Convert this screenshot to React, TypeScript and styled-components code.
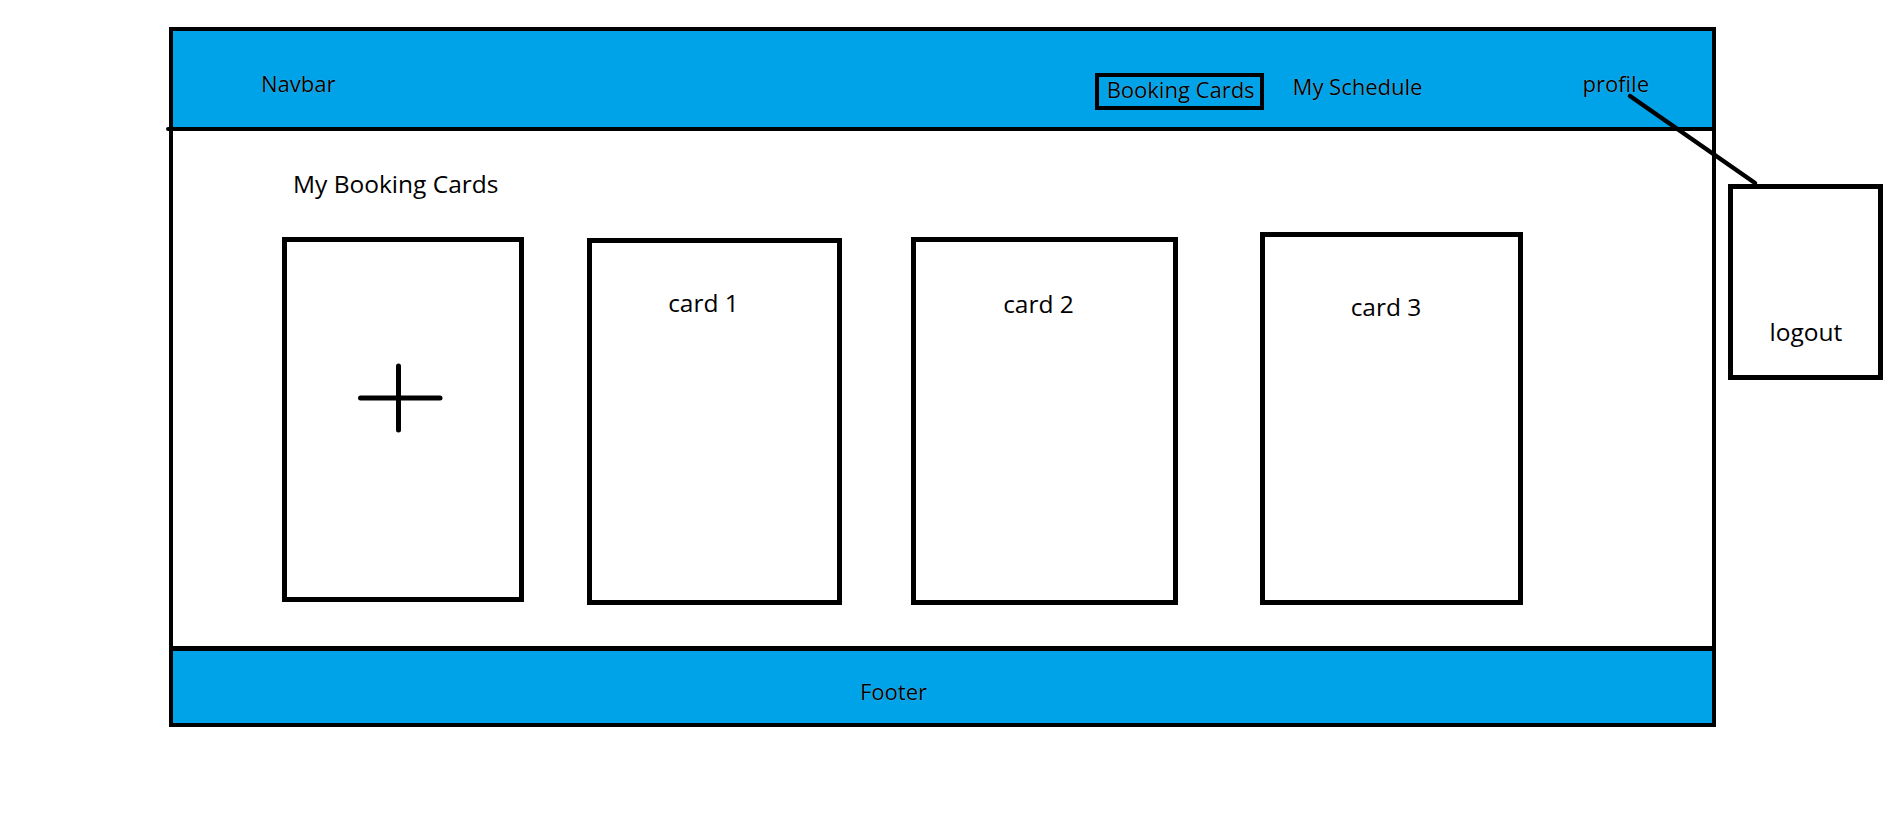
import React from "react";
import styled, { createGlobalStyle } from "styled-components";

const GlobalStyle = createGlobalStyle`
  html, body { margin: 0; padding: 0; background: #ffffff; }
  body { font-family: "Open Sans", "Liberation Sans", sans-serif; color: #000; }
  * { box-sizing: border-box; }
`;

const BLUE = "#00a2e8";

const Page = styled.div`
  position: relative;
  width: 1896px;
  height: 829px;
  padding: 27px 0 0 169px;
  overflow: hidden;
  background: #fff;
`;

const Frame = styled.div`
  position: relative;
  width: 1547px;
  height: 700px;
  border: 4px solid #000;
  display: flex;
  flex-direction: column;
`;

const Navbar = styled.header`
  position: relative;
  flex: none;
  height: 100px;
  background: ${BLUE};
  border-bottom: 4px solid #000;
  display: flex;
  align-items: flex-start;
  padding-right: 63px;
  &::before {
    content: "";
    position: absolute;
    left: -7px;
    bottom: -4px;
    width: 5px;
    height: 4px;
    border-radius: 2px;
    background: #000;
  }
`;

const NavText = styled.span<{ $top: number; $right?: number }>`
  font-size: 22px;
  line-height: 1;
  margin-top: ${(p) => p.$top}px;
  margin-right: ${(p) => p.$right ?? 0}px;
  white-space: nowrap;
  text-shadow: 0 0 1px rgba(255, 255, 255, 0.55);
`;

const Brand = styled(NavText)`
  margin-left: 88px;
  margin-right: auto;
`;

const ActiveLink = styled.span<{ $top: number; $right: number }>`
  font-size: 22px;
  line-height: 24px;
  border: 4px solid #000;
  padding: 0 5px 5px 8px;
  margin-top: ${(p) => p.$top}px;
  margin-right: ${(p) => p.$right}px;
  white-space: nowrap;
  text-shadow: 0 0 1px rgba(255, 255, 255, 0.55);
`;

const ProfileItem = styled(NavText)`
  position: relative;
`;

const Connector = styled.svg`
  position: absolute;
  left: 0;
  top: 0;
  overflow: visible;
  pointer-events: none;
`;

const Popup = styled.div`
  position: absolute;
  left: 146px;
  top: 112px;
  width: 155px;
  height: 196px;
  border: 5px solid #000;
  background: #fff;
  display: flex;
  flex-direction: column;
  align-items: center;
  justify-content: flex-end;
  padding-bottom: 31px;
  font-size: 24.5px;
  line-height: 1;
  text-shadow: none;
  z-index: 2;
`;

const Main = styled.main`
  flex: 1;
  padding-top: 41px;
`;

const Heading = styled.h1`
  margin: 0 0 0 120px;
  font-size: 24.5px;
  font-weight: 400;
  line-height: 1;
`;

const CardsRow = styled.div`
  display: flex;
  align-items: flex-end;
  height: 373px;
  margin-top: 35.5px;
`;

const Card = styled.div<{ $w: number; $h: number; $gap: number; $mb: number; $pt: number; $shift: number }>`
  flex: none;
  width: ${(p) => p.$w}px;
  height: ${(p) => p.$h}px;
  margin-left: ${(p) => p.$gap}px;
  margin-bottom: ${(p) => p.$mb}px;
  border: 5px solid #000;
  background: #fff;
  padding-top: ${(p) => p.$pt}px;
  padding-right: ${(p) => p.$shift * 2}px;
  text-align: center;
  font-size: 24.5px;
  line-height: 1;
`;

const AddCard = styled(Card)`
  padding: 121px 0 0 71px;
  text-align: left;
`;

const Footer = styled.footer`
  flex: none;
  height: 77px;
  border-top: 5px solid #000;
  background: ${BLUE};
  padding: 28.5px 0 0 687px;
  font-size: 22px;
  line-height: 1;
  text-shadow: 0 0 1px rgba(255, 255, 255, 0.55);
`;

const cards = [
  { label: "card 1", w: 255, h: 367, gap: 63, mb: 0, pt: 48, shift: 11 },
  { label: "card 2", w: 267, h: 368, gap: 69, mb: 0, pt: 50, shift: 6 },
  { label: "card 3", w: 263, h: 373, gap: 82, mb: 0, pt: 58, shift: 5.5 },
];

const PlusIcon = () => (
  <svg width="86" height="70" viewBox="0 0 86 70">
    <g stroke="#000" strokeWidth="5" strokeLinecap="round" fill="none">
      <line x1="2.5" y1="35" x2="82" y2="35" />
      <line x1="40.5" y1="3" x2="40.5" y2="67" />
    </g>
  </svg>
);

export default function App() {
  return (
    <>
      <GlobalStyle />
      <Page>
        <Frame>
          <Navbar>
            <Brand $top={41}>Navbar</Brand>
            <ActiveLink $top={42} $right={29}>Booking Cards</ActiveLink>
            <NavText $top={44} $right={160}>My Schedule</NavText>
            <ProfileItem $top={41}>
              profile
              <Connector width="180" height="116">
                <line x1="48" y1="24" x2="173" y2="111" stroke="#000" strokeWidth="4.5" strokeLinecap="round" />
              </Connector>
              <Popup>logout</Popup>
            </ProfileItem>
          </Navbar>
          <Main>
            <Heading>My Booking Cards</Heading>
            <CardsRow>
              <AddCard $w={242} $h={365} $gap={109} $mb={3} $pt={121} $shift={0}>
                <PlusIcon />
              </AddCard>
              {cards.map((c) => (
                <Card key={c.label} $w={c.w} $h={c.h} $gap={c.gap} $mb={c.mb} $pt={c.pt} $shift={c.shift}>
                  {c.label}
                </Card>
              ))}
            </CardsRow>
          </Main>
          <Footer>Footer</Footer>
        </Frame>
      </Page>
    </>
  );
}
